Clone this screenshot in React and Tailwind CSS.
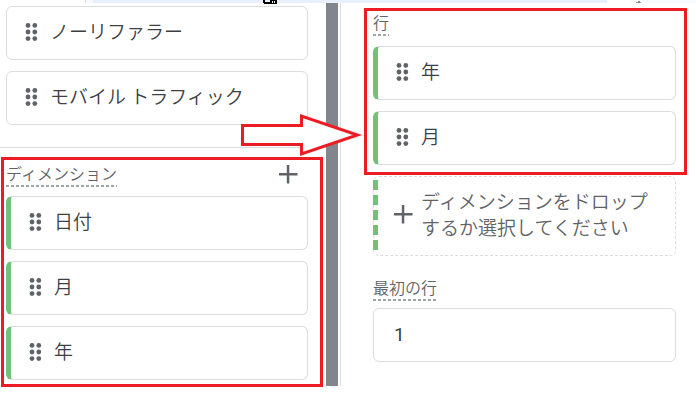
import { useState } from "react";

// Six-dot drag handle shown at the start of every chip
function DragHandle() {
  return (
    <svg width="13" height="18" viewBox="0 0 13 18" className="shrink-0 fill-[#5f6368]" aria-hidden="true">
      <circle cx="3" cy="2.4" r="2.4" />
      <circle cx="9.8" cy="2.4" r="2.4" />
      <circle cx="3" cy="9" r="2.4" />
      <circle cx="9.8" cy="9" r="2.4" />
      <circle cx="3" cy="15.6" r="2.4" />
      <circle cx="9.8" cy="15.6" r="2.4" />
    </svg>
  );
}

function PlusIcon() {
  return (
    <svg width="19" height="19" viewBox="0 0 19 19" className="shrink-0 fill-[#5f6368]" aria-hidden="true">
      <path d="M7.800 0h2.500v7.900h8.200v2.500h-8.200v8.200H7.800v-8.200H0V7.900h7.800z" />
    </svg>
  );
}

function Chip({ label }) {
  return (
    <button
      type="button"
      className="flex h-[54px] w-full items-center gap-3 rounded-md border border-[#dadce0] bg-white pb-[3px] pl-[18px] text-left text-[19px] text-[#3c4043]"
    >
      <DragHandle />
      {label}
    </button>
  );
}

// Dimension chips carry a green edge on the left
function DimensionChip({ label }) {
  return (
    <button
      type="button"
      className="flex h-[54px] w-full items-center gap-3 rounded-md border border-l-[5px] border-[#dadce0] border-l-[#74c078] bg-white pb-[3px] pl-[18px] text-left text-[19px] text-[#3c4043]"
    >
      <DragHandle />
      {label}
    </button>
  );
}

// Dashed underline that takes the width of the text above it
function DashedRule() {
  return (
    <svg height="2" className="block w-0 min-w-full" aria-hidden="true">
      <line x1="0" y1="1" x2="100%" y2="1" stroke="#80868b" strokeWidth="1.6" strokeDasharray="3 2" />
    </svg>
  );
}

function DropZone() {
  return (
    <button
      type="button"
      className="relative mt-px flex h-20 w-full items-center gap-2 rounded-md border border-dashed border-[#dadce0] pb-1 pl-5 text-left text-[19px] leading-[26px] text-[#5f6368]"
    >
      <svg width="5" height="76" className="absolute top-0.5 -left-px" aria-hidden="true">
        <line x1="2.5" y1="1" x2="2.5" y2="74" stroke="#74c078" strokeWidth="5" strokeDasharray="10 5" />
      </svg>
      <PlusIcon />
      <span>
        ディメンションをドロップ
        <br />
        するか選択してください
      </span>
    </button>
  );
}

function Arrow() {
  return (
    <svg width="122" height="44" viewBox="0 0 122 44" className="absolute top-[110px] -left-[85px]" aria-hidden="true">
      <path
        d="M1.5 12.500H60.500V3L116.500 22L60.500 41V31.500H1.500Z"
        fill="#fff"
        stroke="#ed1c24"
        strokeWidth="3"
      />
    </svg>
  );
}

export default function App() {
  const [firstRow, setFirstRow] = useState("1");

  return (
    <div className="bg-white font-['Noto_Sans_CJK_JP',sans-serif] font-[350]">
      {/* Bottom edge of the toolbar */}
      <div className="flex h-[3px]">
        <div className="w-[86px] border-r border-[#dadce0]" />
        <div className="w-[7px] bg-[#f8f9fa]" />
        <div className="flex-1 bg-[#e8f0fe]">
          <svg width="16" height="4" viewBox="0 0 16 4" className="ml-[169px] block" aria-hidden="true">
            <path d="M1 0h14v4H2V3H1z" fill="#000" />
            <path d="M3 0h5v2H3zM10 1h1v2h-1zM12 1h1v2h-1z" fill="#e8f0fe" />
          </svg>
        </div>
        <div className="w-6" />
        <div className="w-[65px] bg-[#f8f9fa]">
          <svg width="6" height="3" viewBox="0 0 6 3" className="ml-[5px] block" aria-hidden="true">
            <path d="M0 2h2v1H0z" fill="#c58a6a" />
            <path d="M2 1h2v2H2z" fill="#7a8794" />
            <path d="M4 2h1v1H4z" fill="#8ab4d8" />
          </svg>
        </div>
      </div>

      <div className="grid grid-cols-[326fr_15px_355fr]">
        {/* Available fields */}
        <div>
          <div className="flex flex-col gap-[11px] border-b border-[#dadce0] pt-[3px] pr-[18px] pb-[22px] pl-1.5">
            <Chip label="ノーリファラー" />
            <Chip label="モバイル トラフィック" />
          </div>

          <section className="mt-[9px] mr-[3px] ml-px border-[3px] border-[#ed1c24] pr-3 pb-1 pl-0.5">
            <div className="flex h-9 items-start justify-between pr-2.5">
              <h2 className="pt-0.5 text-base leading-[23px] text-[#5f6368]">
                ディメンション
                <DashedRule />
              </h2>
              <button type="button" aria-label="追加" className="pt-[5px]">
                <PlusIcon />
              </button>
            </div>
            <div className="flex flex-col gap-[11px]">
              <DimensionChip label="日付" />
              <DimensionChip label="月" />
              <DimensionChip label="年" />
            </div>
          </section>
        </div>

        {/* Divider between the two panels */}
        <div className="relative mb-px flex justify-between border-r border-[#dadce0]">
          <div className="w-3 bg-[#80868b]" />
          <Arrow />
        </div>

        {/* Table settings */}
        <div className="pt-[5px] pr-[9px] pl-[23px]">
          <section className="border-[3px] border-[#ed1c24] pr-2 pb-[7px] pl-1.5">
            <h2 className="flex h-[35px] items-start text-base leading-[23px] text-[#5f6368]">
              <span>
                行
                <DashedRule />
              </span>
            </h2>
            <div className="flex flex-col gap-[11px]">
              <DimensionChip label="年" />
              <DimensionChip label="月" />
            </div>
          </section>

          <div className="pr-[11px] pl-[9px]">
            <DropZone />
            <label htmlFor="first-row" className="mt-5 inline-block align-top text-base leading-[23px] text-[#5f6368]">
              最初の行
              <DashedRule />
            </label>
            <input
              id="first-row"
              type="text"
              value={firstRow}
              onChange={(e) => setFirstRow(e.target.value)}
              className="mt-[7px] block h-[54px] w-full rounded-md border border-[#dadce0] px-5 pb-0.5 font-[Roboto,sans-serif] text-[19px] font-normal text-[#3c4043]"
            />
          </div>
        </div>
      </div>
    </div>
  );
}
